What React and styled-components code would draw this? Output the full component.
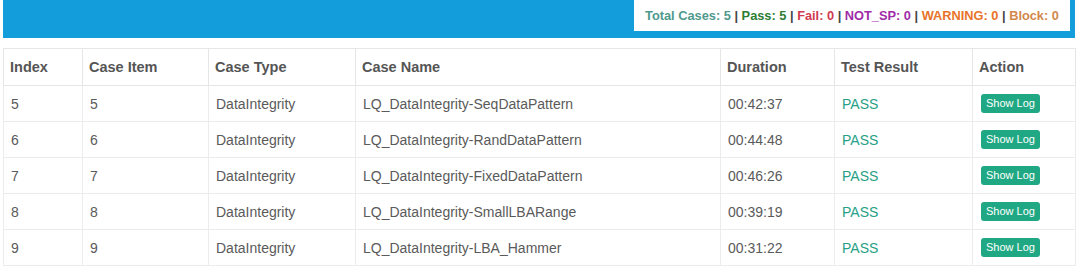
import React from "react";
import styled, { createGlobalStyle } from "styled-components";

const GlobalStyle = createGlobalStyle`
  body {
    margin: 0;
    background: #ffffff;
    font-family: "Liberation Sans", Arial, sans-serif;
  }
`;

const Page = styled.div`
  padding: 0 5px 0 3px;
`;

const TopBar = styled.div`
  height: 38px;
  background: #149ddb;
  display: flex;
  justify-content: flex-end;
  align-items: flex-start;
  padding-right: 5px;
`;

const Summary = styled.div`
  background: #ffffff;
  height: 31px;
  width: 436px;
  box-sizing: border-box;
  display: flex;
  align-items: center;
  justify-content: center;
  font-size: 12.8px;
  font-weight: bold;
  color: #444;
  white-space: pre;
`;

const Stat = styled.span`
  color: ${(props) => props.color};
`;

const Table = styled.table`
  margin-top: 10px;
  width: 100%;
  border-collapse: collapse;
  table-layout: fixed;
  border: 1px solid #e3e3e3;
`;

const HeadCell = styled.th`
  height: 36px;
  padding: 0 7px 0 6px;
  text-align: left;
  font-size: 14.5px;
  font-weight: bold;
  color: #555;
  border: 1px solid #e6e6e6;
`;

const Cell = styled.td`
  height: 35px;
  padding: 0 7px;
  font-size: 14px;
  color: ${(props) => (props.pass ? "#26a086" : "#5a5a5a")};
  border: 1px solid #ececec;
`;

const LogButton = styled.button`
  background: #1fa883;
  color: #ffffff;
  border: none;
  border-radius: 3px;
  font-family: "Liberation Sans", Arial, sans-serif;
  font-size: 11px;
  line-height: 16px;
  padding: 1px 5px 2px;
  margin-left: 1px;
  cursor: pointer;
`;

const columns = [
  { label: "Index", width: 79 },
  { label: "Case Item", width: 126 },
  { label: "Case Type", width: 147 },
  { label: "Case Name", width: 365 },
  { label: "Duration", width: 114 },
  { label: "Test Result", width: 138 },
  { label: "Action", width: 103 },
];

const rows = [
  { index: 5, name: "LQ_DataIntegrity-SeqDataPattern", duration: "00:42:37" },
  { index: 6, name: "LQ_DataIntegrity-RandDataPattern", duration: "00:44:48" },
  { index: 7, name: "LQ_DataIntegrity-FixedDataPattern", duration: "00:46:26" },
  { index: 8, name: "LQ_DataIntegrity-SmallLBARange", duration: "00:39:19" },
  { index: 9, name: "LQ_DataIntegrity-LBA_Hammer", duration: "00:31:22" },
];

const stats = [
  { text: "Total Cases: 5", color: "#4f9a8c" },
  { text: "Pass: 5", color: "#2d7d34" },
  { text: "Fail: 0", color: "#d03a50" },
  { text: "NOT_SP: 0", color: "#a02ca8" },
  { text: "WARNING: 0", color: "#e8742a" },
  { text: "Block: 0", color: "#d2884a" },
];

export default function App() {
  return (
    <Page>
      <GlobalStyle />
      <TopBar>
        <Summary>
          {stats.map((s, i) => (
            <React.Fragment key={s.text}>
              {i > 0 && " | "}
              <Stat color={s.color}>{s.text}</Stat>
            </React.Fragment>
          ))}
        </Summary>
      </TopBar>
      <Table>
        <colgroup>
          {columns.map((c) => (
            <col key={c.label} style={{ width: c.width }} />
          ))}
        </colgroup>
        <thead>
          <tr>
            {columns.map((c) => (
              <HeadCell key={c.label}>{c.label}</HeadCell>
            ))}
          </tr>
        </thead>
        <tbody>
          {rows.map((r) => (
            <tr key={r.index}>
              <Cell>{r.index}</Cell>
              <Cell>{r.index}</Cell>
              <Cell>DataIntegrity</Cell>
              <Cell>{r.name}</Cell>
              <Cell>{r.duration}</Cell>
              <Cell pass>PASS</Cell>
              <Cell>
                <LogButton>Show Log</LogButton>
              </Cell>
            </tr>
          ))}
        </tbody>
      </Table>
    </Page>
  );
}
